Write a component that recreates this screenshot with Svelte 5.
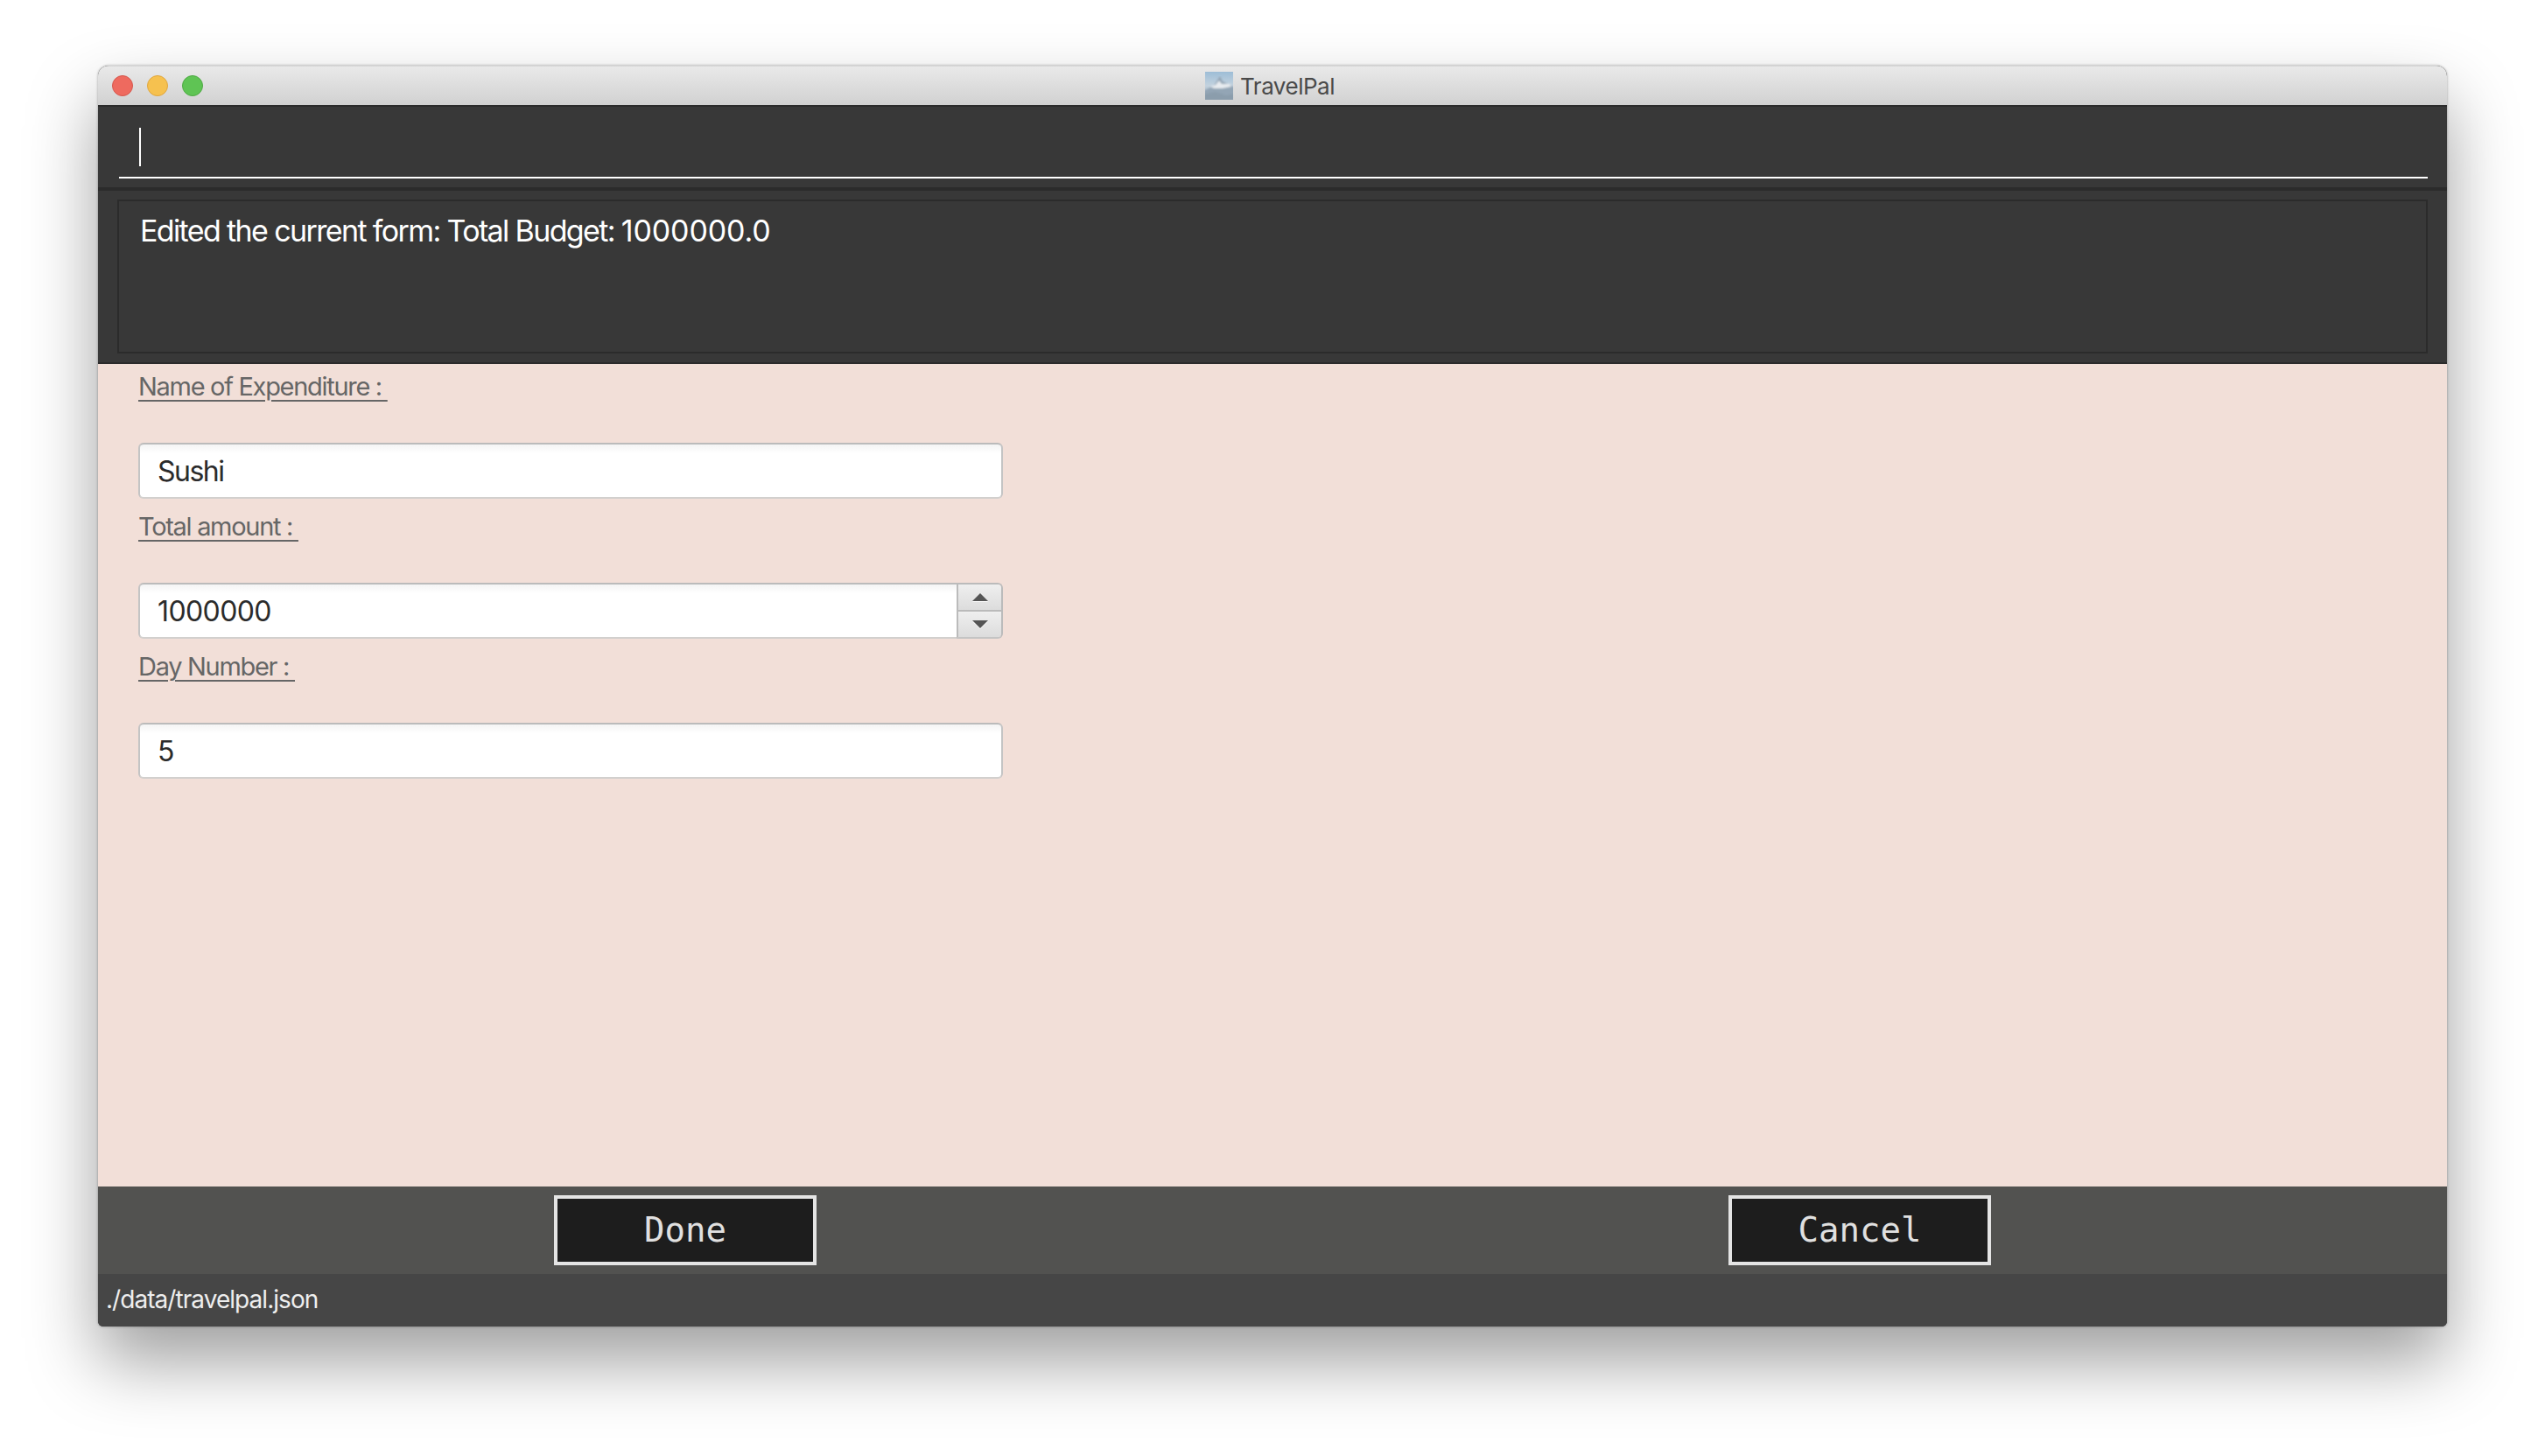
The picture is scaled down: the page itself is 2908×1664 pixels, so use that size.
<script>
  let command = $state("");
  const fields = [
    { label: "Name of Expenditure : ", value: "Sushi" },
    { label: "Total amount : ", value: "1000000", spinner: true },
    { label: "Day Number : ", value: "5" }
  ];
</script>

<div class="page">
  <div class="window">
    <header class="titlebar">
      <div class="lights">
        <span class="light red"></span>
        <span class="light yellow"></span>
        <span class="light green"></span>
      </div>
      <div class="title">
        <svg width="32" height="32" viewBox="0 0 32 32">
          <defs>
            <linearGradient id="sky" x1="0" y1="0" x2="0" y2="1">
              <stop offset="0" stop-color="#9dbdd6" />
              <stop offset="0.5" stop-color="#c3d2de" />
              <stop offset="1" stop-color="#8fa3b3" />
            </linearGradient>
            <filter id="soft" x="0" y="0" width="1" height="1">
              <feGaussianBlur stdDeviation="0.9" />
            </filter>
            <clipPath id="thumb"><rect width="32" height="32" /></clipPath>
          </defs>
          <rect width="32" height="32" fill="url(#sky)" />
          <g clip-path="url(#thumb)" filter="url(#soft)">
            <path d="M-2 22 L10 16 L15 8 L17 5 L20 11 L34 18 V34 H-2 Z" fill="#93a5b5" />
            <path d="M6 17 L12 15 L16 10 L19 14 L28 14 L30 17 L20 19 L10 19 Z" fill="#e8ecf0" />
            <path d="M-2 26 L12 23 L24 27 L34 25 V34 H-2 Z" fill="#8b9dac" />
          </g>
        </svg>
        <span>TravelPal</span>
      </div>
    </header>

    <section class="command">
      <div class="command-field">
        <input class="command-input" bind:value={command} aria-label="Command" />
        <span class="caret"></span>
      </div>
    </section>

    <section class="result">
      <div class="result-box">Edited the current form: Total Budget: <span class="num">1000000.0</span></div>
    </section>

    <main class="form">
      {#each fields as field}
        <div class="field">
          <div class="label">{field.label}</div>
          <div class="control">
            <div class="value" class:with-spinner={field.spinner} class:digits={/^\d+$/.test(field.value)}>{field.value}</div>
            {#if field.spinner}
              <div class="spinner">
                <div class="spin up"><span class="arrow-up"></span></div>
                <div class="spin down"><span class="arrow-down"></span></div>
              </div>
            {/if}
          </div>
        </div>
      {/each}
    </main>

    <div class="buttons">
      <div class="slot"><button>Done</button></div>
      <div class="slot"><button>Cancel</button></div>
    </div>

    <footer class="status">./data/travelpal.json</footer>
  </div>
</div>

<style>
  :global(body) {
    margin: 0;
    background: #fff;
  }

  .page {
    width: 2908px;
    height: 1664px;
    padding: 75px 112px 148px;
    box-sizing: border-box;
    overflow: hidden;
    font-family: Inter, "Liberation Sans", sans-serif;
  }

  .window {
    height: 100%;
    display: flex;
    flex-direction: column;
    border-radius: 12px 12px 6px 6px;
    box-shadow: 0 40px 80px rgba(0, 0, 0, 0.38), 0 0 3px rgba(0, 0, 0, 0.35);
    background: #383838;
    overflow: hidden;
  }

  .titlebar {
    height: 45px;
    flex: none;
    display: grid;
    grid-template-columns: 1fr auto 1fr;
    align-items: center;
    background: linear-gradient(#e9e9e9, #d1d1d1);
    border-top: 1px solid #d4d4d4;
    box-sizing: border-box;
  }

  .lights {
    display: flex;
    gap: 16px;
    padding-left: 16px;
  }

  .light {
    width: 24px;
    height: 24px;
    box-sizing: border-box;
    border-radius: 50%;
    border: 1px solid;
  }
  .red { background: #ee6a5f; border-color: #d5574d; }
  .yellow { background: #f6c14f; border-color: #dfa63f; }
  .green { background: #5fc454; border-color: #4fa944; }

  .title {
    display: flex;
    align-items: center;
    gap: 8px;
    margin-right: 6px;
    font-size: 26px;
    letter-spacing: -0.5px;
    color: #4a4a4a;
  }

  .command {
    height: 98px;
    flex: none;
    box-sizing: border-box;
    padding: 0 22px 10px 24px;
    background: #383838;
    border-top: 2px solid #2b2b2b;
    border-bottom: 4px solid #2b2b2b;
    display: flex;
    align-items: flex-end;
  }

  .command-field {
    position: relative;
    flex: 1;
    height: 60px;
    border-bottom: 2px solid #fff;
  }

  .command-input {
    width: 100%;
    height: 100%;
    background: none;
    border: 0;
    outline: 0;
    padding: 0;
  }

  .caret {
    position: absolute;
    left: 23px;
    top: 4px;
    width: 2px;
    height: 44px;
    background: #fff;
  }

  .result {
    height: 198px;
    flex: none;
    box-sizing: border-box;
    padding: 10px 22px;
    border-bottom: 2px solid #2b2b2b;
    display: flex;
  }

  .result-box {
    flex: 1;
    box-sizing: border-box;
    border: 2px solid #2b2b2b;
    padding: 12px 24px;
    color: #fff;
    font-size: 34px;
    line-height: 44px;
    letter-spacing: -1.63px;
  }

  .num {
    letter-spacing: -0.15px;
  }

  .form {
    flex: 1;
    display: flex;
    flex-direction: column;
    gap: 6px;
    padding: 0 46px;
    background: #f2dfd8;
  }

  .field {
    width: 988px;
  }

  .label {
    height: 90px;
    box-sizing: border-box;
    padding-top: 9px;
    font-size: 29px;
    line-height: 34px;
    color: #666;
    text-decoration: underline;
    text-decoration-thickness: 2px;
    text-underline-offset: 5px;
    white-space: pre;
    letter-spacing: -1.3px;
  }

  .control {
    display: flex;
    height: 64px;
  }

  .value {
    flex: 1;
    box-sizing: border-box;
    border: 2px solid #c4c4c4;
    border-bottom-color: #d2d0ce;
    border-top-color: #bbb;
    border-radius: 6px;
    background: linear-gradient(#f4f4f4, #fff 10px);
    padding-left: 20px;
    font-size: 32px;
    line-height: 62px;
    letter-spacing: -1.5px;
    color: #2b2b2b;
  }

  .value.digits {
    letter-spacing: -0.6px;
  }

  .value.with-spinner {
    border-right: 0;
    border-radius: 6px 0 0 6px;
  }

  .spinner {
    width: 53px;
    flex: none;
    box-sizing: border-box;
    border: 2px solid #bbb;
    border-bottom-color: #c4c4c4;
    border-radius: 0 6px 6px 0;
    display: flex;
    flex-direction: column;
    overflow: hidden;
  }

  .spin {
    flex: 1;
    display: flex;
    align-items: center;
    justify-content: center;
    background: linear-gradient(#efefef, #dcdcdc);
  }
  .spin.up {
    border-bottom: 2px solid #bbb;
  }

  .arrow-up,
  .arrow-down {
    width: 0;
    height: 0;
    border-left: 9px solid transparent;
    border-right: 9px solid transparent;
    filter: drop-shadow(0 1px 0 #fff);
  }
  .arrow-up {
    border-bottom: 9px solid #555;
  }
  .arrow-down {
    border-top: 9px solid #555;
  }

  .buttons {
    height: 100px;
    flex: none;
    display: flex;
    align-items: center;
    background: #525250;
  }

  .slot {
    flex: 1;
    display: flex;
    justify-content: center;
    padding: 0;
  }

  button {
    width: 300px;
    height: 80px;
    box-sizing: border-box;
    border: 4px solid #e4e4e4;
    border-radius: 0;
    background: #1d1d1d;
    color: #e0e0e0;
    font-family: "DejaVu Sans Mono", monospace;
    font-size: 39px;
    padding: 0 0 2px;
  }

  .status {
    height: 60px;
    flex: none;
    box-sizing: border-box;
    padding-left: 9px;
    background: #464646;
    color: #eee;
    font-size: 28px;
    line-height: 58px;
    letter-spacing: -0.95px;
  }
</style>
